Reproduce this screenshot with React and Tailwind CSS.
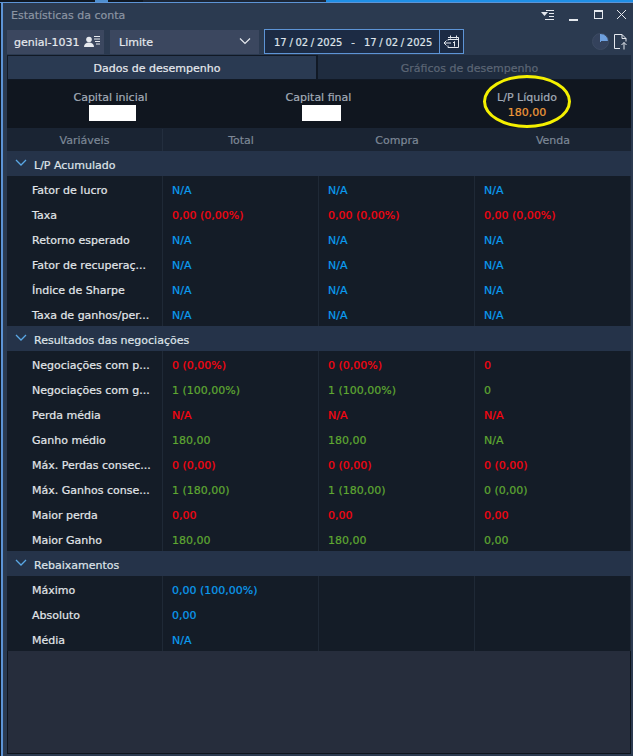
const NA_BLUE = "text-[#0b9cf0]";
const RED = "text-[#fb0410]";
const GREEN = "text-[#5fa832]";

const sections = [
  {
    title: "L/P Acumulado",
    rows: [
      ["Fator de lucro", ["N/A", "b"], ["N/A", "b"], ["N/A", "b"]],
      ["Taxa", ["0,00 (0,00%)", "r"], ["0,00 (0,00%)", "r"], ["0,00 (0,00%)", "r"]],
      ["Retorno esperado", ["N/A", "b"], ["N/A", "b"], ["N/A", "b"]],
      ["Fator de recuperaç...", ["N/A", "b"], ["N/A", "b"], ["N/A", "b"]],
      ["Índice de Sharpe", ["N/A", "b"], ["N/A", "b"], ["N/A", "b"]],
      ["Taxa de ganhos/per...", ["N/A", "b"], ["N/A", "b"], ["N/A", "b"]],
    ],
  },
  {
    title: "Resultados das negociações",
    rows: [
      ["Negociações com p...", ["0 (0,00%)", "r"], ["0 (0,00%)", "r"], ["0", "r"]],
      ["Negociações com g...", ["1 (100,00%)", "g"], ["1 (100,00%)", "g"], ["0", "g"]],
      ["Perda média", ["N/A", "r"], ["N/A", "r"], ["N/A", "r"]],
      ["Ganho médio", ["180,00", "g"], ["180,00", "g"], ["N/A", "g"]],
      ["Máx. Perdas consec...", ["0 (0,00)", "r"], ["0 (0,00)", "r"], ["0 (0,00)", "r"]],
      ["Máx. Ganhos conse...", ["1 (180,00)", "g"], ["1 (180,00)", "g"], ["0 (0,00)", "g"]],
      ["Maior perda", ["0,00", "r"], ["0,00", "r"], ["0,00", "r"]],
      ["Maior Ganho", ["180,00", "g"], ["180,00", "g"], ["0,00", "g"]],
    ],
  },
  {
    title: "Rebaixamentos",
    rows: [
      ["Máximo", ["0,00 (100,00%)", "b"], ["", "b"], ["", "b"]],
      ["Absoluto", ["0,00", "b"], ["", "b"], ["", "b"]],
      ["Média", ["N/A", "b"], ["", "b"], ["", "b"]],
    ],
  },
];

const tones = { b: NA_BLUE, r: RED, g: GREEN };

export default function App() {
  return (
    <div className="relative h-[756px] w-[633px] overflow-hidden bg-[#2b3a50] font-['DejaVu_Sans',sans-serif] text-[11px] leading-none [-webkit-text-stroke:0.2px]">
      <div className="flex h-[2px] bg-[#0f1722]">
        <div className="w-[95px]" />
        <div className="w-[13px] bg-[#4f8fd0]" />
        <div className="w-[35px] bg-[#0f1722]" />
        <div className="w-[183px] bg-[#1b2535]" />
        <div className="w-[307px] bg-[#1f8fe6]" />
      </div>
      <div className="flex h-[754px] flex-col border-t border-[#5d94d6] bg-[#0f1722] pl-[1px]">
        <div className="flex flex-1 flex-col border-l-2 border-[#5d94d6] bg-[#2b3a50] pl-[4px]">
          <TitleBar />
          <Toolbar />
          <Tabs />
          <div className="mr-[2px] flex h-[48px] bg-[#10161f] pt-[12px] text-center">
            <Summary label="Capital inicial" width="w-[207px]" box="ml-[4px] w-[47px]" />
            <Summary label="Capital final" width="w-[209px]" box="ml-[6px] w-[39px]" />
            <Summary label="L/P Líquido" width="w-[208px]" />
          </div>
          <div className="mr-[2px] flex h-[23px] items-center bg-[#1a2433] pt-[1px] text-[#7d8897]">
            <div className="w-[156px] border-r border-[#232e3e] text-center leading-[23px]">Variáveis</div>
            <div className="w-[156px] text-center">Total</div>
            <div className="w-[156px] text-center">Compra</div>
            <div className="w-[156px] text-center">Venda</div>
          </div>
          {sections.map((section) => (
            <Section key={section.title} section={section} />
          ))}
          <div className="mr-[2px] flex-1 border-x border-b border-[#0e141c] bg-[#262d3c]" />
          <div className="h-[2px]" />
        </div>
      </div>
      <div className="pointer-events-none absolute left-[483px] top-[75px] h-[53px] w-[88px] rounded-[50%] border-[3px] border-[#f4f000]" />
    </div>
  );
}

function TitleBar() {
  return (
    <div className="flex h-[26px] shrink-0 items-center justify-between pb-[2px] pr-[5px]">
      <span className="pl-[4px] text-[#8b95a3]">Estatísticas da conta</span>
      <div className="flex items-center gap-[11px] text-[#e4e8ee]">
        <svg width="14" height="10" viewBox="0 0 14 10" fill="none" stroke="currentColor">
          <path d="M0 2h7l-3.500 4z" fill="currentColor" stroke="none" />
          <path d="M5 .5h8M8 3.500h5M8 6.500h5M4 9.500h9" />
        </svg>
        <svg width="12" height="12" viewBox="0 0 12 12" fill="none" stroke="currentColor" className="mx-[2px]">
          <path d="M1 11h9" strokeWidth="2" />
        </svg>
        <svg width="12" height="12" viewBox="0 0 12 12" fill="none" stroke="currentColor">
          <rect x="1.500" y="1.500" width="8" height="8" />
          <path d="M1 2h9" strokeWidth="2" />
        </svg>
        <svg width="12" height="12" viewBox="0 0 12 12" fill="none" stroke="currentColor">
          <path d="M1 1l9 9M10 1l-9 9" />
        </svg>
      </div>
    </div>
  );
}

function Toolbar() {
  return (
    <div className="flex h-[25px] shrink-0 items-center pr-[5px]">
      <div className="flex h-[24px] w-[97px] items-center gap-[4px] whitespace-nowrap bg-[#3b475f] pl-[7px] pt-[2px] text-[#e6e9ee]">
        genial-1031
        <svg width="18" height="12" viewBox="0 0 18 12" fill="currentColor" className="mb-[2px]">
          <circle cx="5" cy="3.500" r="2.800" />
          <path d="M0 11c0-3 2-4.500 5-4.500s5 1.500 5 4.500z" />
          <path d="M10 .5h6M10 3h6M11 5.500h5M12 8h4" stroke="currentColor" fill="none" />
        </svg>
      </div>
      <div className="ml-[6px] flex h-[24px] w-[149px] items-center justify-between bg-[#3b475f] pl-[9px] pr-[5px] pt-[2px] text-[#e6e9ee]">
        Limite
        <svg width="12" height="8" viewBox="0 0 12 8" fill="none" stroke="currentColor" strokeWidth="1.200" className="mb-[4px] mr-[3px]">
          <path d="M1 1.500l5 5 5-5" />
        </svg>
      </div>
      <div className="ml-[5px] flex h-[25px] w-[200px] border border-[#5d94d6] bg-[#1c2b44] text-[#dfe4ea]">
        <div className="flex w-[174px] items-center pl-[9px] pt-[2px] text-[10px]">
          <span className="[word-spacing:-0.5px]">17 / 02 / 2025</span>
          <span className="mx-[9px]">-</span>
          <span className="[word-spacing:-0.5px]">17 / 02 / 2025</span>
        </div>
        <div className="flex flex-1 items-center justify-center border-l border-[#5d94d6]">
          <svg width="16" height="14" viewBox="0 0 16 14" fill="none" stroke="#e4e8ee">
            <path d="M4 2.500h10.500v10H4v-2" />
            <path d="M6.500 .5v3M12.500 .5v3M4 4.500h10.500M4 4.500v1" />
            <path d="M0 8h7M2.500 5.500L0 8l2.500 2.500" />
            <path d="M10.500 6.500v5M9 8l1.500-1.500" />
          </svg>
        </div>
      </div>
      <div className="ml-auto flex items-center gap-[5px]">
        <div className="h-[17px] w-[17px] rounded-full border border-[#3d4b63] bg-[conic-gradient(#6ea0de_0_25%,#34425c_25%_100%)]" />
        <svg width="14" height="16" viewBox="0 0 14 16" fill="none" stroke="#e4e8ee">
          <path d="M6 14.500H.5V.5H8l4 4v3M8 .5v4h4" />
          <path d="M10 15.500V8.500M7.500 11l2.500-2.500 2.500 2.500" />
        </svg>
      </div>
    </div>
  );
}

function Tabs() {
  return (
    <div className="mr-[2px] mt-[1px] flex h-[25px] shrink-0">
      <div className="flex w-[310px] items-center justify-center border border-[#111925] bg-[#2a3a52] pr-[10px] pt-[2px] text-[#e6e9ee]">
        Dados de desempenho
      </div>
      <div className="flex flex-1 items-center justify-center border-b border-l border-[#111925] bg-[#1f2c3f] pr-[10px] pt-[2px] text-[#5c6675]">
        Gráficos de desempenho
      </div>
    </div>
  );
}

function Summary({ label, width, box }) {
  return (
    <div className={`${width} flex flex-col items-center`}>
      <div className="h-[13px] text-[#a3acb8]">{label}</div>
      {box ? (
        <div className={`${box} h-[16px] bg-white`} />
      ) : (
        <div className="mt-[2px] text-[#f09a3a]">180,00</div>
      )}
    </div>
  );
}

function Section({ section }) {
  return (
    <>
      <div className="mr-[2px] flex h-[25px] shrink-0 items-center bg-[#253349] pt-[4px] text-[#dfe4ea]">
        <svg width="12" height="8" viewBox="0 0 12 8" fill="none" stroke="#5aa8e6" strokeWidth="1.300" className="mb-[5px] ml-[8px]">
          <path d="M1 1l5 5 5-5" />
        </svg>
        <span className="ml-[7px]">{section.title}</span>
      </div>
      {section.rows.map((row) => (
        <div key={row[0]} className="mr-[2px] flex h-[25px] shrink-0 bg-[#141c27]">
          <div className="flex w-[156px] items-center border-r border-[#1f2936] pl-[25px] pt-[4px] text-[#e2e6ea]">{row[0]}</div>
          {row.slice(1).map((cell, index) => (
            <div key={index} className={`flex w-[156px] items-center border-r border-[#1f2936] pl-[9px] pt-[4px] ${tones[cell[1]]}`}>
              {cell[0]}
            </div>
          ))}
        </div>
      ))}
    </>
  );
}
